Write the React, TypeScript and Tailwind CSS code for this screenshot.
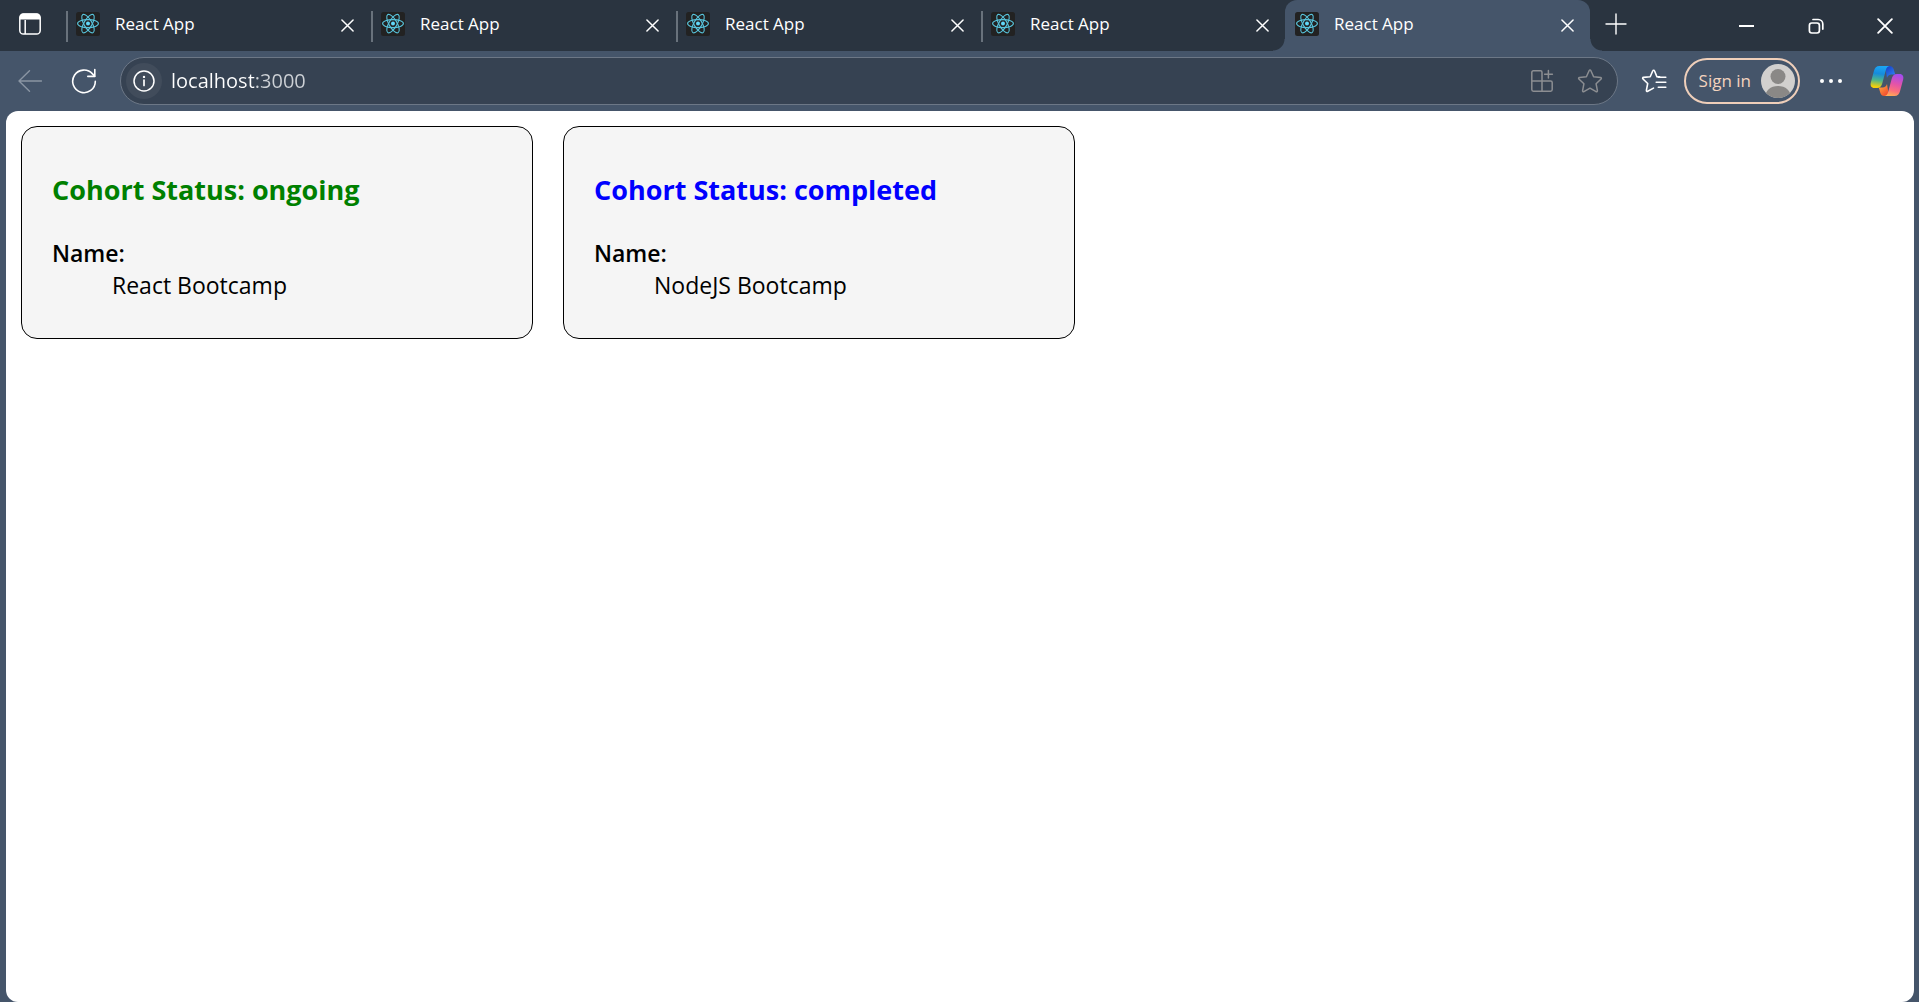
import React from "react";

const tabs = [
  { id: 1, title: "React App", active: false },
  { id: 2, title: "React App", active: false },
  { id: 3, title: "React App", active: false },
  { id: 4, title: "React App", active: false },
  { id: 5, title: "React App", active: true },
];

const cohorts = [
  { status: "ongoing", name: "React Bootcamp", color: "text-[#008000]" },
  { status: "completed", name: "NodeJS Bootcamp", color: "text-[#0000ff]" },
];

function ReactFavicon() {
  return (
    <svg className="size-6 shrink-0" viewBox="0 0 24 24" fill="none" aria-hidden="true">
      <rect width="24" height="24" rx="2.5" fill="#222222" />
      <g stroke="#58c4dc" strokeWidth="1.1">
        <ellipse cx="12" cy="11.6" rx="10.4" ry="4" />
        <ellipse cx="12" cy="11.6" rx="10.4" ry="4" transform="rotate(60 12 11.6)" />
        <ellipse cx="12" cy="11.6" rx="10.4" ry="4" transform="rotate(120 12 11.6)" />
      </g>
      <circle cx="12" cy="11.6" r="2" fill="#61dafb" />
    </svg>
  );
}

function CloseIcon({ className }: { className: string }) {
  return (
    <svg className={className} viewBox="0 0 14 14" fill="none" stroke="currentColor" strokeWidth="1.6" strokeLinecap="round" aria-hidden="true">
      <path d="M1 1l12 12M13 1L1 13" />
    </svg>
  );
}

function TabActionsIcon() {
  return (
    <svg className="size-6" viewBox="0 0 24 24" fill="none" aria-hidden="true">
      <rect x="1.8" y="2" width="20.4" height="20" rx="3.6" stroke="#fff" strokeWidth="1.5" />
      <path d="M1.8 7.6V5.4A3.6 3.6 0 0 1 5.4 1.6h13.2a3.6 3.6 0 0 1 3.6 3.8v2.2z" fill="#fff" />
      <path d="M7.2 8v14" stroke="#fff" strokeWidth="1.5" />
    </svg>
  );
}

function BackIcon() {
  return (
    <svg className="size-6" viewBox="0 0 24 24" fill="none" stroke="currentColor" strokeWidth="1.4" strokeLinecap="round" strokeLinejoin="round" aria-hidden="true">
      <path d="M23.5 12H1M11.5 1.8L1 12l10.5 10.2" />
    </svg>
  );
}

function ReloadIcon() {
  return (
    <svg className="size-[26px]" viewBox="0 0 26 26" fill="none" stroke="currentColor" strokeWidth="1.6" strokeLinecap="round" strokeLinejoin="round" aria-hidden="true">
      <path d="M24.3 13.4A11.3 11.3 0 1 1 21.5 5.9L23.6 8.2" />
      <path d="M23.8 1.6v6.8h-7" />
    </svg>
  );
}

function InfoIcon() {
  return (
    <svg className="size-[22px]" viewBox="0 0 22 22" fill="none" aria-hidden="true">
      <circle cx="11" cy="11" r="10" stroke="#fff" strokeWidth="1.5" />
      <path d="M11 10v5.4" stroke="#fff" strokeWidth="1.7" strokeLinecap="round" />
      <circle cx="11" cy="6.9" r="1.2" fill="#fff" />
    </svg>
  );
}

function InstallIcon() {
  return (
    <svg className="size-6" viewBox="0 0 24 24" fill="none" stroke="currentColor" strokeWidth="1.5" strokeLinecap="round" strokeLinejoin="round" aria-hidden="true">
      <path d="M12 12V3.2A1.4 1.4 0 0 0 10.6 1.8H3.4A1.6 1.6 0 0 0 1.8 3.4v17.2a1.6 1.6 0 0 0 1.6 1.6h17.2a1.6 1.6 0 0 0 1.6-1.6v-7A1.6 1.6 0 0 0 20.6 12zM1.8 12H12v10.2" />
      <path d="M18.4 1.4v7.6M14.6 5.2h7.8" />
    </svg>
  );
}

function StarIcon() {
  return (
    <svg className="size-[26px]" viewBox="0 0 26 26" fill="none" stroke="currentColor" strokeWidth="1.5" strokeLinejoin="round" aria-hidden="true">
      <path d="M12.2 2.5a.9.9 0 0 1 1.6 0l2.8 6.2 7 .8c.8.1 1 1 .5 1.5l-5 4.8 1.3 6.9c.1.8-.6 1.3-1.3 1L13 20.2l-6.1 3.5c-.7.3-1.4-.2-1.3-1l1.3-6.9-5-4.8c-.5-.5-.3-1.4.5-1.5l7-.8z" />
    </svg>
  );
}

function FavoritesIcon() {
  return (
    <svg className="size-[26px]" viewBox="0 0 26 26" fill="none" stroke="currentColor" strokeWidth="1.6" strokeLinecap="round" strokeLinejoin="round" aria-hidden="true">
      <path d="M18.6 8.8h-2.7L13.5 2.8a.9.9 0 0 0-1.7 0L9.2 8.7l-6.7.7c-.9.1-1.1 1-.5 1.6l4.7 4.5-1.3 6.8c-.1.9.6 1.4 1.3 1l5.8-3.2" />
      <path d="M17.3 9.2h7.5M15.2 14.2h9.6M17.3 19.2h7.5" />
    </svg>
  );
}

function Avatar() {
  return (
    <svg className="size-[34px]" viewBox="0 0 34 34" aria-hidden="true">
      <defs>
        <clipPath id="avatar-clip">
          <circle cx="17" cy="17" r="17" />
        </clipPath>
      </defs>
      <g clipPath="url(#avatar-clip)">
        <rect width="34" height="34" fill="#d2d0ce" />
        <circle cx="17" cy="12.5" r="7.5" fill="#8a8886" />
        <path d="M4 34c0-7.5 5.5-12 13-12s13 4.5 13 12z" fill="#8a8886" />
      </g>
    </svg>
  );
}

function CopilotIcon() {
  return (
    <svg className="h-8 w-[34px]" viewBox="0 0 34 32" aria-hidden="true">
      <defs>
        <linearGradient id="cp-left" x1="10" y1="1" x2="7" y2="23" gradientUnits="userSpaceOnUse">
          <stop offset="0" stopColor="#1ba6f5" />
          <stop offset=".35" stopColor="#168bdc" />
          <stop offset=".65" stopColor="#4fb58a" />
          <stop offset=".95" stopColor="#f4cf0a" />
        </linearGradient>
        <linearGradient id="cp-right" x1="27" y1="9" x2="21" y2="31" gradientUnits="userSpaceOnUse">
          <stop offset="0" stopColor="#a44bf0" />
          <stop offset=".45" stopColor="#e454a8" />
          <stop offset=".75" stopColor="#fb6f7c" />
          <stop offset="1" stopColor="#ffac55" />
        </linearGradient>
        <linearGradient id="cp-top" x1="17" y1="2" x2="24" y2="10" gradientUnits="userSpaceOnUse">
          <stop offset="0" stopColor="#1a44c9" />
          <stop offset="1" stopColor="#2d7cf0" />
        </linearGradient>
        <linearGradient id="cp-bottom" x1="9" y1="23" x2="16" y2="31" gradientUnits="userSpaceOnUse">
          <stop offset="0" stopColor="#ff9a3c" />
          <stop offset="1" stopColor="#f0492f" />
        </linearGradient>
      </defs>
      <path d="M15 1h4.5c2.3 0 3.6 1.3 4.2 3.3L25.2 9.5h-3.7c-2.5 0-3.8 1.2-4.5 3.5z" fill="url(#cp-top)" />
      <path d="M19 31h-4.5c-2.3 0-3.6-1.3-4.2-3.3L8.8 22.5h3.7c2.5 0 3.8-1.2 4.5-3.5z" fill="url(#cp-bottom)" />
      <path d="M9.5 1h10c-2 .3-3 1.8-3.7 4.2l-3.5 13c-.8 3-2.3 4.8-5.3 4.8H4.5C1.2 23 0 20.5.9 17.2L4 5.8C4.9 2.7 6.3 1 9.5 1z" fill="url(#cp-left)" />
      <path d="M24.5 31h-10c2-.3 3-1.8 3.7-4.2l3.5-13C22.5 10.8 24 9 27 9h2.5c3.3 0 4.5 2.5 3.6 5.8L30 26.2c-.9 3.1-2.3 4.8-5.5 4.8z" fill="url(#cp-right)" />
    </svg>
  );
}

function BrowserTab({ title, active }: { title: string; active: boolean }) {
  return (
    <div
      className={
        active
          ? "relative flex h-[51px] w-[305px] min-w-0 items-center rounded-t-xl bg-[#45556a] pr-4 pl-[10px]"
          : "relative flex h-[51px] w-[305px] min-w-0 items-center pr-4 pl-[11px]"
      }
    >
      {active ? (
        <>
          <span className="absolute bottom-0 -left-3 size-3 bg-[radial-gradient(circle_at_0_0,transparent_11px,#45556a_12px)]" />
          <span className="absolute -right-3 bottom-0 size-3 bg-[radial-gradient(circle_at_100%_0,transparent_11px,#45556a_12px)]" />
        </>
      ) : (
        <span className="absolute top-[11px] left-[1px] h-[31px] w-[2px] bg-[#69727c]" />
      )}
      <button type="button" className="flex min-w-0 flex-1 items-center gap-[15px] pb-[3px] text-left text-[17px] leading-6 text-white">
        <ReactFavicon />
        <span className="truncate">{title}</span>
      </button>
      <button type="button" aria-label="Close tab" className="flex h-6 w-[14px] items-center justify-center text-white">
        <CloseIcon className="size-[13px]" />
      </button>
    </div>
  );
}

export default function App() {
  return (
    <div className="flex min-h-screen flex-col bg-[#45556a] font-['Open_Sans','Noto_Sans',sans-serif]">
      <header>
        <div className="flex h-[51px] items-center bg-[#2a3440]">
          <button type="button" aria-label="Tab actions" className="flex h-full w-[65px] shrink-0 items-center pb-[3px] pl-[18px]">
            <TabActionsIcon />
          </button>
          <nav aria-label="Tabs" className="flex min-w-0">
            {tabs.map((tab) => (
              <BrowserTab key={tab.id} title={tab.title} active={tab.active} />
            ))}
          </nav>
          <button type="button" aria-label="New tab" className="flex h-full w-[52px] shrink-0 items-center justify-center pb-1 text-white">
            <svg className="size-[22px]" viewBox="0 0 22 22" stroke="currentColor" strokeWidth="1.4" strokeLinecap="round" aria-hidden="true">
              <path d="M11 1v20M1 11h20" />
            </svg>
          </button>
          <div className="ml-auto flex h-full shrink-0 text-white">
            <button type="button" aria-label="Minimize" className="flex w-[69px] items-center justify-center">
              <span className="h-[2px] w-[15px] bg-white" />
            </button>
            <button type="button" aria-label="Restore" className="flex w-[69px] items-center justify-center">
              <svg className="size-4" viewBox="0 0 16 16" fill="none" stroke="currentColor" strokeWidth="1.7" strokeLinecap="round" aria-hidden="true">
                <rect x="1.4" y="5" width="10" height="10" rx="2.4" />
                <path d="M5 1.5h5.2a4.6 4.6 0 0 1 4.6 4.6v5" />
              </svg>
            </button>
            <button type="button" aria-label="Close window" className="flex w-[69px] items-center justify-center">
              <CloseIcon className="size-4" />
            </button>
          </div>
        </div>

        <div className="flex h-[60px] items-center">
          <button type="button" aria-label="Back" className="flex w-[60px] shrink-0 justify-center text-[#8a95a3]">
            <BackIcon />
          </button>
          <button type="button" aria-label="Refresh" className="flex w-[48px] shrink-0 justify-center text-white">
            <ReloadIcon />
          </button>
          <div className="ml-3 flex h-12 min-w-0 flex-1 items-center rounded-full border border-[#6c7786] bg-[#364252] pr-[14px] pl-[5px]">
            <button type="button" aria-label="View site information" className="flex size-9 shrink-0 items-center justify-center rounded-full bg-[#414c5b]">
              <InfoIcon />
            </button>
            <input
              type="text"
              aria-label="Address and search bar"
              defaultValue="localhost:3000"
              className="ml-[9px] min-w-0 flex-1 bg-[linear-gradient(90deg,#ffffff_83px,#cdd1d6_83px)] bg-clip-text text-xl leading-7 text-transparent caret-white outline-none"
            />
            <button type="button" aria-label="Install app" className="mr-[23px] shrink-0 text-[#8c8e92]">
              <InstallIcon />
            </button>
            <button type="button" aria-label="Add to favorites" className="shrink-0 text-[#8c8e92]">
              <StarIcon />
            </button>
          </div>
          <button type="button" aria-label="Favorites" className="ml-[23px] shrink-0 text-white">
            <FavoritesIcon />
          </button>
          <button type="button" className="ml-[17px] flex h-[46px] shrink-0 items-center gap-[10px] rounded-full border-2 border-[#efcfba] pr-[3px] pl-[13px] text-[17px] leading-6 text-[#f3d3be]">
            <span>Sign in</span>
            <Avatar />
          </button>
          <button type="button" aria-label="Settings and more" className="ml-5 flex w-[22px] shrink-0 justify-between text-white">
            <span className="size-1 rounded-full bg-white" />
            <span className="size-1 rounded-full bg-white" />
            <span className="size-1 rounded-full bg-white" />
          </button>
          <button type="button" aria-label="Copilot" className="mr-[15px] ml-7 shrink-0">
            <CopilotIcon />
          </button>
        </div>
      </header>

      <main className="mr-[5px] ml-[6px] flex flex-1 flex-wrap content-start items-start gap-[30px] rounded-xl bg-white p-[15px]">
        {cohorts.map((cohort) => (
          <article key={cohort.name} className="w-[512px] rounded-2xl border border-black bg-[#f5f5f5] px-[30px] pt-[45px] pb-[37px] text-black">
            <h3 className={`text-[27px] leading-9 font-bold ${cohort.color}`}>Cohort Status: {cohort.status}</h3>
            <dl className="mt-[29px] text-[23px] leading-8">
              <dt className="font-semibold">Name:</dt>
              <dd className="ml-[60px]">{cohort.name}</dd>
            </dl>
          </article>
        ))}
      </main>
    </div>
  );
}
